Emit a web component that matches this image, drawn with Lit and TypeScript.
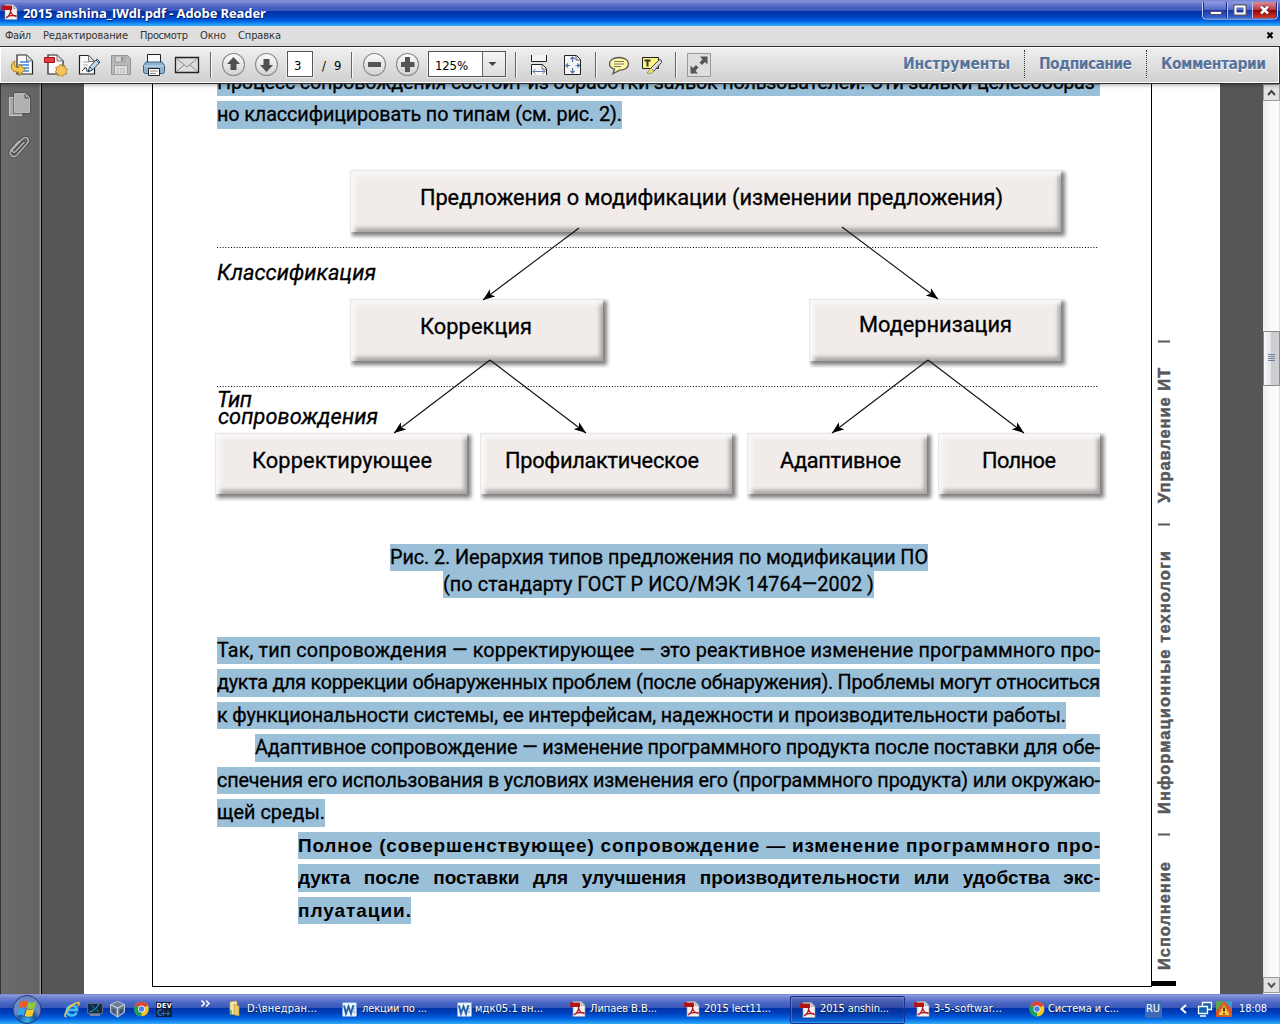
import { LitElement, html, svg, css } from "lit";
import { customElement, property } from "lit/decorators.js";
import { classMap } from "lit/directives/class-map.js";

/* Spreads its text over an exact width by adjusting letter or word spacing. */
@customElement("fit-text")
class FitText extends LitElement {
  static styles = css`
    :host { display: inline-block; white-space: pre; text-align: left; }
    .t { display: inline-block; }
  `;
  @property({ type: Number }) w = 0;
  @property() text = "";
  @property({ type: Boolean }) words = false;
  render() {
    return html`<span class="t">${this.text}</span>`;
  }
  updated() {
    const span = this.renderRoot.querySelector(".t") as HTMLElement;
    this.style.width = `${this.w}px`;
    span.style.letterSpacing = "0px";
    const natural = span.getBoundingClientRect().width;
    const spare = this.w - natural;
    if (this.words) {
      span.style.wordSpacing = `${spare / Math.max(1, this.text.split(" ").length - 1)}px`;
    } else {
      span.style.letterSpacing = `${spare / Math.max(1, this.text.length - 1)}px`;
    }
    span.style.marginRight = "-20px";
  }
}

const fit = (text: string, w: number, words = false) =>
  html`<fit-text .text=${text} .w=${w} .words=${words}></fit-text>`;

/* A slot of a bar: drawn in window coordinates, placed by flow. */
const slot = (x: number, w: number, y: number, h: number, body: unknown) =>
  html`<svg class="slot" width=${w} height=${h} viewBox="${x} ${y} ${w} ${h}">${body}</svg>`;
const tool = (x: number, w: number, body: unknown) => slot(x, w, 48, 34, body);
const task = (x: number, w: number, body: unknown) => slot(x, w, 994, 30, body);

const sheet = (x: number, y: number, w: number, h: number) => svg`
  <path d="M${x} ${y}h${w - 6}l6 6v${h - 6}h${-w}z" fill="#fafafa" stroke="#222" stroke-width="1.2"/>
  <path d="M${x + w - 6} ${y}v6h6" fill="#ddd" stroke="#777"/>`;

const pdf = (x: number, y: number) => svg`
  <path d="M${x + 3} ${y}h8l4 4v11h-12z" fill="#f4f4f4" stroke="#999" stroke-width=".6"/>
  <path d="M${x + 11} ${y}v4h4" fill="#ccc" stroke="#999" stroke-width=".6"/>
  <path d="M${x} ${y + 1}h10v4.500h-10z" fill="#b31217"/>
  <path d="M${x + 4} ${y + 13.5}c3-2 5-5 4.500-8.500M${x + 8.5} ${y + 6}c.5 3 3 5.500 6 6M${x + 4.5} ${y + 12.5}c3-1.500 6-2 10-1" fill="none" stroke="#b5161b" stroke-width="1.300"/>`;

const word = (x: number, y: number) => svg`
  <rect x=${x + 0.5} y=${y + 0.5} width="14" height="14" rx="1" fill="#e9f1fa" stroke="#7fa5d4"/>
  <path d="M${x + 10} ${y + 4}h3M${x + 11} ${y + 7}h2M${x + 11} ${y + 10}h2" stroke="#5d8fcc"/>
  <path d="M${x + 2} ${y + 3.5}l2 8 2.500-7 2.500 7 2.200-8" fill="none" stroke="#2360a8" stroke-width="1.900"/>`;

const chrome = (x: number, y: number, r: number) => svg`
  <circle cx=${x} cy=${y} r=${r} fill="#f4c51e"/>
  <path d="M${x} ${y}L${x - r * 0.87} ${y - r * 0.5}A${r} ${r} 0 0 1 ${x + r * 0.87} ${y - r * 0.5}z" fill="#dc4437"/>
  <path d="M${x} ${y}L${x - r * 0.87} ${y - r * 0.5}A${r} ${r} 0 0 0 ${x} ${y + r}z" fill="#1a9e59"/>
  <circle cx=${x} cy=${y} r=${r * 0.47} fill="#fff"/><circle cx=${x} cy=${y} r=${r * 0.37} fill="#4a80e8"/>`;

const folder = (x: number, y: number) => svg`
  <path d="M${x + 1} ${y + 1}l6-1 1 1v13l-7-1z" fill="#f6e9a6" stroke="#c9ac52" stroke-width=".7"/>
  <path d="M${x + 5} ${y + 3}l5 2v10l-5-1.500z" fill="#e5cd6e" stroke="#b99a3f" stroke-width=".7"/>
  <path d="M${x + 2} ${y + 9}v5" stroke="#4ba67e" stroke-width="1.500"/>`;

const sep = (x: number, w: number) =>
  tool(x, w, svg`<path d="M${x + 4.5} 52v26" stroke="#666"/><path d="M${x + 5.5} 52v26" stroke="#f8f8f8"/>`);

const disc = (cx: number) => svg`
  <circle cx=${cx} cy="64.500" r="11" fill="url(#disc)" stroke="#8b8b8b" stroke-width="1.100"/>`;

const discDefs = svg`<defs><linearGradient id="disc" x1="0" y1="0" x2="0" y2="1">
  <stop offset="0" stop-color="#fcfcfc"/><stop offset="1" stop-color="#d2d2d2"/></linearGradient></defs>`;
const discDefs2 = discDefs;

interface Node { x: number; y: number; w: number; h: number; text: string; tx: number; tw: number; base: number; }
/* Window coordinates; the diagram canvas has its origin at (153, 129). */
const nodes: Node[] = [
  { x: 350, y: 170, w: 711, h: 62, text: "Предложения о модификации (изменении предложения)", tx: 420, tw: 583, base: 205 },
  { x: 350, y: 299, w: 253, h: 62, text: "Коррекция", tx: 420, tw: 112, base: 334 },
  { x: 809, y: 299, w: 252, h: 62, text: "Модернизация", tx: 859, tw: 153, base: 332 },
  { x: 215, y: 433, w: 252, h: 61, text: "Корректирующее", tx: 252, tw: 180, base: 468 },
  { x: 480, y: 433, w: 252, h: 61, text: "Профилактическое", tx: 505, tw: 194, base: 468 },
  { x: 747, y: 433, w: 180, h: 61, text: "Адаптивное", tx: 780, tw: 121, base: 468 },
  { x: 938, y: 433, w: 162, h: 61, text: "Полное", tx: 982, tw: 74, base: 468 },
];
const notes = [
  { text: "Классификация", tx: 217, tw: 159, base: 280 },
  { text: "Тип", tx: 217, tw: 35, base: 407 },
  { text: "сопровождения", tx: 218, tw: 160, base: 424 },
];
const arrows = [
  [579, 228, 483, 300], [842, 227, 938, 299], [490, 360, 394, 433],
  [490, 360, 586, 433], [928, 360, 832, 433], [928, 360, 1024, 433],
];

interface Line { text: string; left: number; w: number; bold?: boolean; words?: boolean; }
const intro: Line[] = [
  { text: "Процесс сопровождения состоит из обработки заявок пользователей. Эти заявки целесообраз-", left: 64, w: 883 },
  { text: "но классифицировать по типам (см. рис. 2).", left: 64, w: 405 },
];
const caption: Line[] = [
  { text: "Рис. 2. Иерархия типов предложения по модификации ПО", left: 237, w: 538 },
  { text: "(по стандарту ГОСТ Р ИСО/МЭК 14764—2002 )", left: 290, w: 431 },
];
const body: Line[] = [
  { text: "Так, тип сопровождения — корректирующее — это реактивное изменение программного про-", left: 64, w: 883 },
  { text: "дукта для коррекции обнаруженных проблем (после обнаружения). Проблемы могут относиться", left: 64, w: 883 },
  { text: "к функциональности системы, ее интерфейсам, надежности и производительности работы.", left: 64, w: 849 },
  { text: "Адаптивное сопровождение — изменение программного продукта после поставки для обе-", left: 102, w: 845 },
  { text: "спечения его использования в условиях изменения его (программного продукта) или окружаю-", left: 64, w: 883 },
  { text: "щей среды.", left: 64, w: 108 },
  { text: "Полное (совершенствующее) сопровождение — изменение программного про-", left: 145, w: 802, bold: true },
  { text: "дукта после поставки для улучшения производительности или удобства экс-", left: 145, w: 802, bold: true, words: true },
  { text: "плуатации.", left: 145, w: 113, bold: true },
];
const line = (l: Line) => html`<div class=${classMap({ line: true, bold: !!l.bold })} style="margin-left:${l.left}px">${fit(l.text, l.w, !!l.words)}</div>`;

/* Section names running up the margin: lowest point and length of each. */
const tags: [string, number, number][] = [
  ["Исполнение", 970, 108], ["Информационные технологи", 814, 263], ["Управление ИТ", 503, 135],
];
const ticks = [834.5, 524.5, 341.5];

const menus: [string, number][] = [
  ["Файл", 26], ["Редактирование", 85], ["Просмотр", 48], ["Окно", 26], ["Справка", 43],
];

interface Task { x: number; icon: unknown; text: string; w: number; gap: number; active?: boolean; }
const tasks: Task[] = [
  { x: 220, icon: folder(229, 1001), text: "D:\\внедран...", w: 70, gap: 27 },
  { x: 334, icon: word(342, 1002), text: "лекции по ...", w: 65, gap: 28 },
  { x: 448, icon: word(457, 1002), text: "мдк05.1 вн...", w: 68, gap: 27 },
  { x: 562, icon: pdf(570, 1001.5), text: "Липаев В.В...", w: 67, gap: 28 },
  { x: 676, icon: pdf(684, 1001.5), text: "2015 lect11...", w: 67, gap: 28 },
  { x: 790, icon: pdf(800, 1002.5), text: "2015 anshin...", w: 69, gap: 30, active: true },
  { x: 904, icon: pdf(914, 1001.5), text: "3-5-softwar...", w: 68, gap: 30 },
  { x: 1018, icon: chrome(1037, 1009, 7.5), text: "Система и с...", w: 71, gap: 30 },
];

@customElement("app-root")
class AppRoot extends LitElement {
  static styles = css`
    :host { display: block; width: 1280px; height: 1024px; overflow: hidden; }
    * { box-sizing: border-box; }
    .window { display: flex; flex-direction: column; width: 1280px; height: 1024px; overflow: hidden;
      font: 11px/14px "DejaVu Sans Condensed", "DejaVu Sans", "Liberation Sans", sans-serif; font-stretch: condensed; color: #000; }
    .slot { display: block; flex: none; }

    .title { height: 26px; flex: none; display: flex; align-items: flex-start; color: #fff;
      background: linear-gradient(#6f7fcf 0, #8b95db 1px, #6a7bce 3px, #4a62c2 7px, #3a57ba 10.900px, #0031a6 11px, #0042be 17px, #0062e2 21px, #1e94f4 24px, #34acf6 26px); }
    .name { padding-top: 4px; flex: 1; font: bold 13px/18px "Open Sans", "Noto Sans", sans-serif; text-shadow: 1px 1px 0 #0a1a66; }

    .menu { height: 20px; flex: none; display: flex; padding: 3px 0 0 5px; background: #dedede; color: #333; border-bottom: 1px solid #f4f4f4; }
    .entry { margin-right: 12px; }
    .push { flex: 1; }

    .tools { height: 38px; flex: none; display: flex; align-items: flex-start; padding: 1px 0 0 0;
      border: solid #2c2c2c; border-width: 1px 1px 1px 0; box-shadow: inset 1px 1px 0 #fff, inset -1px -1px 0 #fff, 0 1px 4px rgba(0,0,0,.35);
      background: linear-gradient(#f0f0f0, #cfcfcf); position: relative; z-index: 1; }
    .page-no { width: 26px; height: 26px; margin-top: 3px; border: 1px solid #555; outline: 1px solid #eee; background: #fff; padding: 7px 0 0 6px; font-size: 13px; line-height: 14px; }
    .of { width: 34px; padding: 11px 0 0 9px; font-size: 13px; line-height: 14px; display: flex; gap: 8px; }
    .zoom { width: 78px; height: 26px; margin: 3px 5px 0 4px; border: 1px solid #555; outline: 1px solid #eee; background: #fff; display: flex; }
    .pct { width: 54px; padding: 7px 0 0 6px; font-size: 13px; line-height: 14px; border-right: 1px solid #666; }
    .drop { flex: 1; background: linear-gradient(#f5f5f5, #ddd); }
    .panes { margin-left: auto; display: flex; padding: 2px 13px 0 0; font: bold 15.500px/29px "DejaVu Sans Condensed", "DejaVu Sans", sans-serif; font-stretch: condensed; color: #56739b; text-shadow: 0 1px 0 #fff; }
    .pane { height: 28px; }
    .pane + .pane { border-left: 1px dotted #333; margin-left: 14px; padding-left: 14px; }

    .main { flex: 1; min-height: 0; display: flex; overflow: hidden; background: #565656; }
    .nav { width: 42px; flex: none; background: linear-gradient(90deg, #333 1px, #6b6b6b 1px, #646464 39px, #8d8d8d 40px, #a0a0a0 41px, #000 41px); }
    .sheet { width: 1136px; margin-left: 42px; flex: none; background: #fff; display: flex; padding-left: 68px; overflow: hidden; }
    .frame { width: 1000px; height: 903px; flex: none; border: solid #000; border-width: 0 1px 1px; overflow: hidden; }
    .flow { margin-top: -15.500px; display: flex; flex-direction: column; align-items: flex-start; }
    .lines { display: flex; flex-direction: column; align-items: flex-start; gap: 5px;
      font: 400 19.800px/28.200px Roboto, "Liberation Sans", sans-serif; font-stretch: normal; -webkit-text-stroke: .3px #000; }
    .lines.tight { gap: 0; padding-bottom: 39px; }
    .line { background: #9abfd9; height: 27.500px; }
    .tight .line { height: 27px; }
    .bold { font: bold 19px/28.200px "Liberation Sans", sans-serif; -webkit-text-stroke: 0; }
    .canvas { position: relative; width: 998px; height: 415px; flex: none;
      font: 400 21.800px/26px Roboto, "Liberation Sans", sans-serif; font-stretch: normal; -webkit-text-stroke: .3px #000; }
    .node { position: absolute; background: #f1ecea;
      box-shadow: inset 1px 1px 1px #e3e5e8, inset 5px 5px 4px #faf8f7, inset -3px -4px 4px #aaa6a4, 3px 3px 4px 1px rgba(0,0,0,.5); clip-path: inset(0 -8px -8px 0); }
    .label { position: absolute; }
    .note { font-style: italic; }
    .wires { position: absolute; left: 0; top: 0; }
    .rail { width: 24px; flex: none; display: flex; flex-direction: column; }
    .tag { font: bold 16.500px "Liberation Sans", sans-serif; fill: #58585a; stroke: #58585a; stroke-width: .5px; }
    .bar { background: #000; height: 5px; flex: none; }

    .scroll { width: 17px; margin-left: auto; flex: none; display: flex; flex-direction: column;
      background: linear-gradient(90deg, #ececee, #f8f9fb 8px, #fdfdfe 15px, #dcdcdc); }
    .track { flex: 1; }

    .tasks { height: 30px; flex: none; display: flex; color: #fff;
      background: linear-gradient(#7480cb 0, #8f99da 1px, #6e80d0 4px, #4a66c4 9px, #3757b8 13.900px, #0033a8 14px, #0040bc 19px, #0060e0 24px, #1c90f2 28px, #34aaf6 30px); }
    .task { width: 114px; display: flex; height: 30px; flex: none; position: relative; }
    .cap { padding-top: 8px; text-shadow: 0 1px 1px #123; }
    .active { background: linear-gradient(rgba(40,50,110,.25), rgba(10,20,110,.25)); background-size: 113px 26px; background-position: 0 2px; background-repeat: no-repeat; }
    .active::after { content: ""; position: absolute; left: 0; top: 2px; width: 113px; height: 26px; border: 1px solid #1b3190; border-radius: 2px; box-shadow: inset 1px 1px 0 rgba(130,150,220,.45); }
    .gap { width: 13px; }
    .lang { width: 17px; height: 17px; margin-top: 7px; background: #3d68b5; padding: 1px 0 0 1px; }
    .clock { padding-top: 8px; }
  `;

  render() {
    return html`<div class="window">
      <div class="title">
        ${slot(0, 23, 0, 26, pdf(2, 4.5))}
        <div class="name">${fit("2015 anshina_IWdI.pdf - Adobe Reader", 243)}</div>
        ${slot(1200, 80, 0, 26, svg`
          <defs><linearGradient id="wb" x1="0" y1="0" x2="0" y2="1"><stop offset="0" stop-color="#8c9be0"/><stop offset=".5" stop-color="#5067c5"/><stop offset=".52" stop-color="#1c35a5"/><stop offset="1" stop-color="#3668d4"/></linearGradient>
          <linearGradient id="wr" x1="0" y1="0" x2="0" y2="1"><stop offset="0" stop-color="#dc8a98"/><stop offset=".5" stop-color="#bd3541"/><stop offset=".52" stop-color="#980000"/><stop offset="1" stop-color="#d03c25"/></linearGradient></defs>
          <path d="M1202.500 2v14q0 3 3 3h69q3 0 3-3V2" fill="#1b2d80" stroke="#c4d2f8"/>
          <path d="M1204 2h22v16h-20q-2 0-2-2z" fill="url(#wb)"/><path d="M1228 2h24v16h-24z" fill="url(#wb)"/><path d="M1253 2h23v14q0 2-2 2h-21z" fill="url(#wr)"/>
          <path d="M1227.500 2v16M1252.500 2v16" stroke="#b4c1f0"/>
          <path d="M1210.500 11.500h11v3h-11z" fill="#fff" stroke="#53566a"/>
          <path d="M1235 6h10v8h-10z" fill="none" stroke="#55586a" stroke-width="3.500"/><path d="M1235.500 6.500h9v7h-9z" fill="none" stroke="#fff" stroke-width="2"/>
          <path d="M1261 6.500l7 7M1268 6.500l-7 7" stroke="#5a2020" stroke-width="4"/><path d="M1261 6.500l7 7M1268 6.500l-7 7" stroke="#fff" stroke-width="2.500"/>`)}
      </div>

      <div class="menu">
        ${menus.map(([t, w]) => html`<span class="entry">${fit(t, w)}</span>`)}
        <span class="push"></span>
        ${slot(1264, 16, 29, 14, svg`<path d="M1267.500 32.500l5 5.500M1272.500 32.500l-5 5.500" stroke="#000" stroke-width="2"/>`)}
      </div>

      <div class="tools">
        ${tool(0, 38, svg`${sheet(17, 55, 15.5, 19)}
          <path d="M20 62h9M20 65h9M20 68h9M22 71h7" stroke="#3c84d8" stroke-width="1.500"/>
          <path d="M15 61c-5 2-5 10 1 11h3v4l6-6.500-6-5.500v3.500h-2c-2 0-3-3-2-6.500z" fill="#f6c552" stroke="#a97a1d"/>`)}
        ${tool(38, 34, svg`${sheet(48, 55, 15, 19)}
          <path d="M44.500 57.500h10v5h-10z" fill="#e43b3f" stroke="#a51318"/>
          <path d="M60.500 64l1.600 2.300 2.700-1 .2 2.800 2.500 1.400-1.500 2 .7 2.500-2.800.2-1.400 2.300-2-1.500-2.500.9-.3-2.700-2.600-1.200 1.600-2.100-.9-2.600 2.700-.4z" fill="#f5c65c" stroke="#b98a2c"/>`)}
        ${tool(72, 33, svg`${sheet(79.5, 55.5, 15, 18.5)}
          <path d="M83 62h6M83 65h5M83 68h4" stroke="#aaa"/><path d="M82 71c3-2 2-4 4-3s-1 4 2 3" fill="none" stroke="#222"/>
          <path d="M88 72l1.500-5 7.500-8 3 3-7.500 8z" fill="#c5d9ec" stroke="#324b66"/><path d="M88 72l2-1.500-1-1z" fill="#222"/><path d="M90 67l3 3M96 60l3 3" stroke="#324b66"/>`)}
        ${tool(105, 32, svg`<path d="M111.500 55.500h16l3 3v16h-19z" fill="#b9b9b9" stroke="#929292"/>
          <path d="M115 56h10v6h-10z" fill="#d4d4d4" stroke="#979797"/><path d="M121 57h2.500v4h-2.500z" fill="#8e8e8e"/><path d="M114.500 65.500h13v9h-13z" fill="#ddd" stroke="#a0a0a0"/><path d="M117 69h8M117 72h8" stroke="#aaa" stroke-dasharray="2 1"/>`)}
        ${tool(137, 33, svg`<path d="M147.500 54.500h13v9h-13z" fill="#fafafa" stroke="#222"/>
          <path d="M146 62l-2.500 3.500v6q0 2 2 2h17q2 0 2-2v-6L162 62z" fill="#8db2cf" stroke="#3e5f7c"/><path d="M144 66h20" stroke="#c9e2f4"/>
          <path d="M148.500 68.500h11v7h-11z" fill="#fff" stroke="#222"/><path d="M150 71h8M150 73.500h6" stroke="#888"/>`)}
        ${tool(170, 36, svg`<path d="M175.500 57.500h23v15h-23z" fill="#ddd" stroke="#222" stroke-width="1.300"/>
          <path d="M176 58l11 9 11-9M176 72l8-7M198 72l-8-7" fill="none" stroke="#888"/>`)}
        ${sep(206, 13)}
        ${tool(219, 31, svg`${discDefs}${disc(233.5)}<path d="M233.500 57l6.500 7h-3.500v6h-6v-6h-3.500z" fill="#505050"/>`)}
        ${tool(250, 37, svg`${discDefs2}${disc(266.5)}<path d="M266.500 72l6.500-7h-3.500v-6h-6v6h-3.500z" fill="#505050"/>`)}
        <div class="page-no">3</div>
        <div class="of"><span>/</span><span>9</span></div>
        ${sep(347, 13)}
        ${tool(360, 30, svg`${disc(374.5)}<path d="M368 62h13v5h-13z" fill="#555"/>`)}
        ${tool(390, 34, svg`${disc(407.5)}<path d="M401 62h4v-5h5v5h4.500v5h-4.500v5h-5v-5h-4z" fill="#555"/>`)}
        <div class="zoom"><div class="pct">${fit("125%", 33)}</div><div class="drop">${slot(484, 20, 53, 24, svg`<path d="M489.500 63h8l-4 4z" fill="#444"/>`)}</div></div>
        ${sep(511, 13)}
        ${tool(524, 34, svg`<path d="M531.500 55v6.500h15V55" fill="#f4f4f4" stroke="#222"/><path d="M531.500 75v-10.500h11l4 4V75" fill="#f8f8f8" stroke="#222"/><path d="M542 65v4h4" fill="none" stroke="#777"/>
          <path d="M533 71.500h12M535.500 69l-2.500 2.500 2.500 2.500M542.500 69l2.500 2.500-2.500 2.500" fill="none" stroke="#6176b5"/>`)}
        ${tool(558, 33, svg`<path d="M564.500 55.500h12l4 4v15h-16z" fill="#f5f5f5" stroke="#222"/><path d="M576 56v4h4" fill="none" stroke="#555"/>
          <path d="M572.500 57v5M570.500 59l2-2 2 2M572.500 73v-5M570.500 71l2 2 2-2M566 65.500h4M568 63.500l-2 2 2 2M579.500 65.500h-4M577.500 63.500l2 2-2 2" fill="none" stroke="#5270ae" stroke-width="1.200"/>`)}
        ${sep(591, 13)}
        ${tool(604, 32, svg`<path d="M619 57.500c5.500 0 9.500 2.700 9.500 6.500s-4 6.200-9 6.200l-6.500 3.500 1.500-4.500c-3-1-5-3-5-5.200 0-3.800 4-6.500 9.500-6.500z" fill="#fff9a0" stroke="#555" stroke-width="1.300"/><path d="M614 61.500h10M614 64h10M614 66.500h7" stroke="#777"/>`)}
        ${tool(636, 35, svg`<path d="M642.500 57.500h16v11h-16z" fill="#fdf47a" stroke="#222"/><path d="M644.500 59.500h6v2h-2v5h-2v-5h-2z" fill="#333"/>
          <path d="M649 72l2-4 8-8q3-1 2.500 2.500l-8 9z" fill="#ddd" stroke="#444"/><path d="M647 73l4-5 3 3-3 2.500z" fill="#f4e35c" stroke="#777" stroke-width=".7"/>`)}
        ${sep(671, 13)}
        ${tool(684, 34, svg`<path d="M687.500 53.500h23v23h-23z" fill="#dedede" stroke="#999"/>
          <path d="M707.500 56.500v8l-2.500-2.500-3 3-2.500-2.500 3-3-2.500-3zM690.500 73.500v-8l2.500 2.500 3-3 2.500 2.500-3 3 2.500 3z" fill="#555"/>`)}
        <div class="panes">
          <div class="pane">${fit("Инструменты", 107)}</div>
          <div class="pane">${fit("Подписание", 93)}</div>
          <div class="pane">${fit("Комментарии", 105)}</div>
        </div>
      </div>

      <div class="main">
        <div class="nav">${slot(0, 42, 84, 90, svg`
          <path d="M9.500 97.500h12v18h-12z" fill="#a9a9a9" stroke="#c8c8c8"/>
          <path d="M14.500 93.500h11l4 4v15h-15z" fill="#aaa" stroke="#3c3c3c" stroke-width="2"/><path d="M14.500 93.500h11l4 4v15h-15z" fill="#b0b0b0" stroke="#d0d0d0" stroke-width=".8"/><path d="M25 94v4h4" fill="#999" stroke="#555"/>
          <g fill="none" stroke-linecap="round"><path d="M24 142.500l-8.500 9c-2 2-4.500-.5-2.500-2.500l9.500-10c3.500-3.500 8 .5 4.500 4.500L17 155c-4 4-9.500-1-5.500-5.500L19 141" stroke="#444" stroke-width="3"/><path d="M24 142.500l-8.500 9c-2 2-4.500-.5-2.500-2.500l9.500-10c3.500-3.500 8 .5 4.500 4.500L17 155c-4 4-9.500-1-5.500-5.500L19 141" stroke="#b4b4b4" stroke-width="1.600"/></g>`)}</div>
        <div class="sheet">
          <div class="frame"><div class="flow">
            <div class="lines">${intro.map(line)}</div>
            <div class="canvas">
              ${nodes.map((n) => html`
                <div class="node" style="left:${n.x - 153}px;top:${n.y - 129}px;width:${n.w}px;height:${n.h}px"></div>
                <div class="label" style="left:${n.tx - 153}px;top:${n.base - 129 - 20}px">${fit(n.text, n.tw)}</div>`)}
              ${notes.map((n) => html`<div class="label note" style="left:${n.tx - 153}px;top:${n.base - 129 - 20}px">${fit(n.text, n.tw)}</div>`)}
              <svg class="wires" width="998" height="415" viewBox="153 129 998 415">
                <defs><marker id="tip" markerUnits="userSpaceOnUse" markerWidth="14" markerHeight="12" refX="12" refY="5" orient="auto"><path d="M12 5L0 .5 3 5 0 9.500z"/></marker></defs>
                <path d="M217 247.500h882M217 386.500h882" stroke="#000" stroke-dasharray="1 1.800"/>
                ${arrows.map(([a, b, c, d]) => svg`<path d="M${a} ${b}L${c} ${d}" stroke="#111" stroke-width="1.100" marker-end="url(#tip)"/>`)}
              </svg>
            </div>
            <div class="lines tight">${caption.map(line)}</div>
            <div class="lines">${body.map(line)}</div>
          </div></div>
          <div class="rail">
            ${slot(1152, 24, 84, 897, svg`
              ${tags.map(([t, y, len]) => svg`<text class="tag" transform="translate(1170 ${y}) rotate(-90)" textLength=${len}>${t}</text>`)}
              ${ticks.map((y) => svg`<path d="M1158 ${y - 143 + 143 + 0}h12" stroke="#58585a" stroke-width="2"/>`)}`)}
            <div class="bar"></div>
          </div>
        </div>
        <div class="scroll">
          ${slot(1263, 17, 84, 17, svg`<path d="M1263.500 84.500h16v16h-16z" fill="#e2e2e4" stroke="#999"/><path d="M1268 95l3.500-4 3.500 4" fill="none" stroke="#444" stroke-width="2"/>`)}
          <div class="track">${slot(1263, 17, 101, 300, svg`<defs><linearGradient id="th"><stop offset="0" stop-color="#fafafa"/><stop offset=".45" stop-color="#e4e5e7"/><stop offset=".5" stop-color="#cbccd0"/><stop offset="1" stop-color="#d0d0d4"/></linearGradient></defs>
            <path d="M1263.500 331.500h16v54h-16z" fill="url(#th)" stroke="#888"/><path d="M1268 354.500h7M1268 356.500h7M1268 358.500h7M1268 360.500h7" stroke="#6d849b"/>`)}</div>
          ${slot(1263, 17, 977, 17, svg`<path d="M1263.500 977.500h16v15h-16z" fill="#e2e2e4" stroke="#999"/><path d="M1268 983l3.500 4 3.500-4" fill="none" stroke="#555" stroke-width="2"/>`)}
        </div>
      </div>

      <div class="tasks">
        ${task(0, 56, svg`<defs><radialGradient id="orb" cx=".5" cy=".9"><stop offset="0" stop-color="#38b8ef"/><stop offset=".6" stop-color="#1b55a5"/><stop offset="1" stop-color="#6c87bd"/></radialGradient></defs>
          <circle cx="27" cy="1009.500" r="14" fill="url(#orb)" stroke="#173c84"/>
          <path d="M20.500 1002q3.500-2 7-.5l-1.700 6.500q-3.500-1.500-7 0z" fill="#ee5a25"/><path d="M28.500 1002q4 1.500 8-.5l-2 7q-4 1.500-7.500-.3z" fill="#93c83d"/><path d="M18.500 1009q4-1.500 7 0l-1.700 6.500q-3.500-1.500-7.300 0z" fill="#35a6e8"/><path d="M26.700 1009.200q3.500 1.500 7.500 0l-1.900 6.800q-4 1.500-7.500-.3z" fill="#fcc92b"/>`)}
        ${task(56, 28, svg`<path d="M67.500 1010h9.500c0-6-9.500-6-10 .5-.4 5.500 7.500 6.500 9.700 2" fill="none" stroke="#43bdf1" stroke-width="2.800"/><path d="M66.500 1016.500c-4 1 0-8 6.500-12 6-3.500 7.500-2 5 1" fill="none" stroke="#f4c548" stroke-width="1.500"/>`)}
        ${task(84, 23, svg`<path d="M87.500 1003.500h15v10h-15z" fill="#102c46" stroke="#667"/><path d="M89 1012c4-1 7-3 10-8" stroke="#3ca8d8" fill="none"/><path d="M91 1005l8 7" stroke="#2a6d9c"/><path d="M90 1015h10" stroke="#999" stroke-width="1.500"/>`)}
        ${task(107, 24, svg`<path d="M117.500 1001.500l7 3v8l-7 4.500-7-4.500v-8z" fill="#6b7c92" stroke="#b7c2cf"/><path d="M110.500 1004.500l7 3.500 7-3.500M117.500 1008v9" fill="none" stroke="#c7d1dd" stroke-width="1.200"/><path d="M112.500 1008.500l3 1.500v4l-3-2zM119.500 1010l3-1.500v4l-3 1.500z" fill="#3a4f6e"/>`)}
        ${task(131, 23, chrome(141.5, 1009, 7.3))}
        ${slot(154, 66, 994, 30, svg`<path d="M156 1002h16v15h-16z" fill="#111c3c"/><text x="156.500" y="1008" font-size="7" font-weight="bold" fill="#fff" textLength="15">DEV</text><text x="157" y="1016" font-size="8" font-weight="bold" fill="#2a79c9" textLength="14">C++</text>
          <path d="M201.500 1000.500l3 3-3 3M206 1000.500l3 3-3 3" fill="none" stroke="#fff" stroke-width="1.500"/>`)}
        ${tasks.map((t) => html`<div class=${classMap({ task: true, active: !!t.active })}>${task(t.x, t.gap, t.icon)}<div class="cap">${fit(t.text, t.w)}</div></div>`)}
        <span class="gap"></span>
        <div class="lang">${fit("RU", 14)}</div>
        ${task(1162, 77, svg`<path d="M1186 1005l-4.500 4 4.500 4" fill="none" stroke="#fff" stroke-width="2"/>
          <path d="M1202.500 1002.500h9v7h-9z" fill="#1860a4" stroke="#fff" stroke-width="1.300"/><path d="M1198.500 1006.500h9v7h-9z" fill="#1466ae" stroke="#fff" stroke-width="1.300"/><path d="M1200 1016h6" stroke="#fff" stroke-width="1.500"/>
          <path d="M1216 1001h16v16h-16z" fill="#e2532c"/><path d="M1216 1001h8l-8 10z" fill="#56a654"/><path d="M1224 1001h8v8z" fill="#3b9cc9"/><path d="M1216 1017v-5l6 5z" fill="#dc4520"/>
          <path d="M1224 1004l6.500 11.500h-13z" fill="#fcc43c" stroke="#a9691c" stroke-width=".8"/><path d="M1224 1007.500v4M1224 1013v1.300" stroke="#111" stroke-width="1.500"/>`)}
        <div class="clock">${fit("18:08", 28)}</div>
      </div>
    </div>`;
  }
}
